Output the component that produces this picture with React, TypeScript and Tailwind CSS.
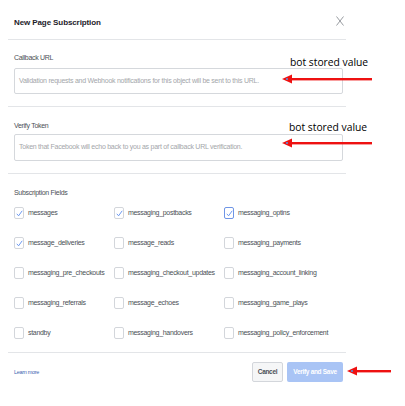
import React from 'react';

const fields: { label: string; checked?: boolean; focused?: boolean }[] = [
  { label: 'messages', checked: true },
  { label: 'messaging_postbacks', checked: true },
  { label: 'messaging_optins', checked: true, focused: true },
  { label: 'message_deliveries', checked: true },
  { label: 'message_reads' },
  { label: 'messaging_payments' },
  { label: 'messaging_pre_checkouts' },
  { label: 'messaging_checkout_updates' },
  { label: 'messaging_account_linking' },
  { label: 'messaging_referrals' },
  { label: 'message_echoes' },
  { label: 'messaging_game_plays' },
  { label: 'standby' },
  { label: 'messaging_handovers' },
  { label: 'messaging_policy_enforcement' },
];

function Checkbox({ checked, focused }: { checked?: boolean; focused?: boolean }) {
  return (
    <span
      className={
        'flex h-[12px] w-[10px] shrink-0 items-center justify-center rounded-[2px] border bg-white ' +
        (focused ? 'border-[#6f95e6]' : 'border-[#d3d6db]')
      }
    >
      {checked && (
        <svg width="7" height="7" viewBox="0 0 7 7">
          <polyline points="0.8,3.8 2.6,5.8 6.2,0.8" fill="none" stroke="#5b8def" strokeWidth="0.9" />
        </svg>
      )}
    </span>
  );
}

function Arrow({ left, top, width }: { left: number; top: number; width: number }) {
  return (
    <svg
      className="absolute"
      style={{ left, top }}
      width={width}
      height="10"
      viewBox={`0 0 ${width} 10`}
    >
      <polygon points="0,5 10,0.5 10,9.5" fill="#ee1111" />
      <rect x="9" y="4" width={width - 9} height="2.4" fill="#ee1111" />
      <rect x="4" y="4.2" width="2" height="1.6" fill="#5a8fd8" />
    </svg>
  );
}

export default function App() {
  return (
    <div className="relative h-[406px] w-[405px] bg-white font-['Liberation_Sans',Arial,sans-serif]">
      <div className="ml-[8px] w-[338px]">
        <div className="flex h-[39px] items-start justify-between pl-[6px] pr-[3px] pt-[17px]">
          <span className="text-[8px] font-bold leading-[12px] tracking-[-0.1px] text-[#1d2129]">
            New Page Subscription
          </span>
          <svg className="mr-[-1px] mt-[-1px]" width="8" height="10" viewBox="0 0 8 10">
            <path d="M0.5 0.5 L7.5 9.5 M7.5 0.5 L0.5 9.5" stroke="#7f8389" strokeWidth="0.8" fill="none" />
          </svg>
        </div>
        <div className="border-t border-[#e3e5e8]" />

        <div className="pb-[12px] pl-[6px] pr-[3px] pt-[13px]">
          <div className="text-[7px] leading-[10px] tracking-[-0.3px] text-[#4b4f56]">Callback URL</div>
          <div className="mt-[5px] flex h-[26px] items-center rounded-[2px] border border-[#d5d8dc] pl-[4px]">
            <span className="text-[7px] tracking-[-0.25px] text-[#a3a6aa]">
              Validation requests and Webhook notifications for this object will be sent to this URL.
            </span>
          </div>
        </div>
        <div className="border-t border-[#e3e5e8]" />

        <div className="pb-[12px] pl-[6px] pr-[3px] pt-[14px]">
          <div className="text-[7px] leading-[10px] tracking-[-0.3px] text-[#4b4f56]">Verify Token</div>
          <div className="mt-[3px] flex h-[27px] items-center rounded-[2px] border border-[#d5d8dc] pl-[4px]">
            <span className="text-[7px] tracking-[-0.25px] text-[#a3a6aa]">
              Token that Facebook will echo back to you as part of callback URL verification.
            </span>
          </div>
        </div>
        <div className="border-t border-[#e3e5e8]" />

        <div className="pb-[4px] pl-[6px] pr-[3px] pt-[14px]">
          <div className="text-[7px] leading-[10px] tracking-[-0.3px] text-[#4b4f56]">Subscription Fields</div>
          <div className="grid grid-cols-[100px_110px_1fr]">
            {fields.map((f) => (
              <div key={f.label} className="flex h-[30px] items-center gap-[4px]">
                <Checkbox checked={f.checked} focused={f.focused} />
                <span className="text-[7px] tracking-[-0.3px] text-[#4b4f56]">{f.label}</span>
              </div>
            ))}
          </div>
        </div>
        <div className="border-t border-[#e3e5e8]" />

        <div className="flex items-center justify-between pl-[6px] pr-[3px] pt-[9px]">
          <a className="text-[5.5px] tracking-[-0.3px] text-[#4267b2]">Learn more</a>
          <div className="flex gap-[4px]">
            <button className="h-[20px] w-[31px] rounded-[2px] border border-[#d3d6db] bg-[#f5f6f7] text-[6.5px] font-bold tracking-[-0.3px] text-[#4b4f56]">
              Cancel
            </button>
            <button className="h-[20px] w-[56px] rounded-[2px] bg-[#a9c4f5] text-[6.5px] font-bold tracking-[-0.3px] text-white">
              Verify and Save
            </button>
          </div>
        </div>
      </div>

      <span className="absolute left-[290px] top-[55px] font-['Open_Sans',sans-serif] text-[10.3px] leading-[14px] text-black">
        bot stored value
      </span>
      <span className="absolute left-[289px] top-[120px] font-['Open_Sans',sans-serif] text-[10.3px] leading-[14px] text-black">
        bot stored value
      </span>
      <Arrow left={282} top={74} width={90} />
      <Arrow left={282} top={138} width={90} />
      <Arrow left={347} top={366} width={44} />
    </div>
  );
}
